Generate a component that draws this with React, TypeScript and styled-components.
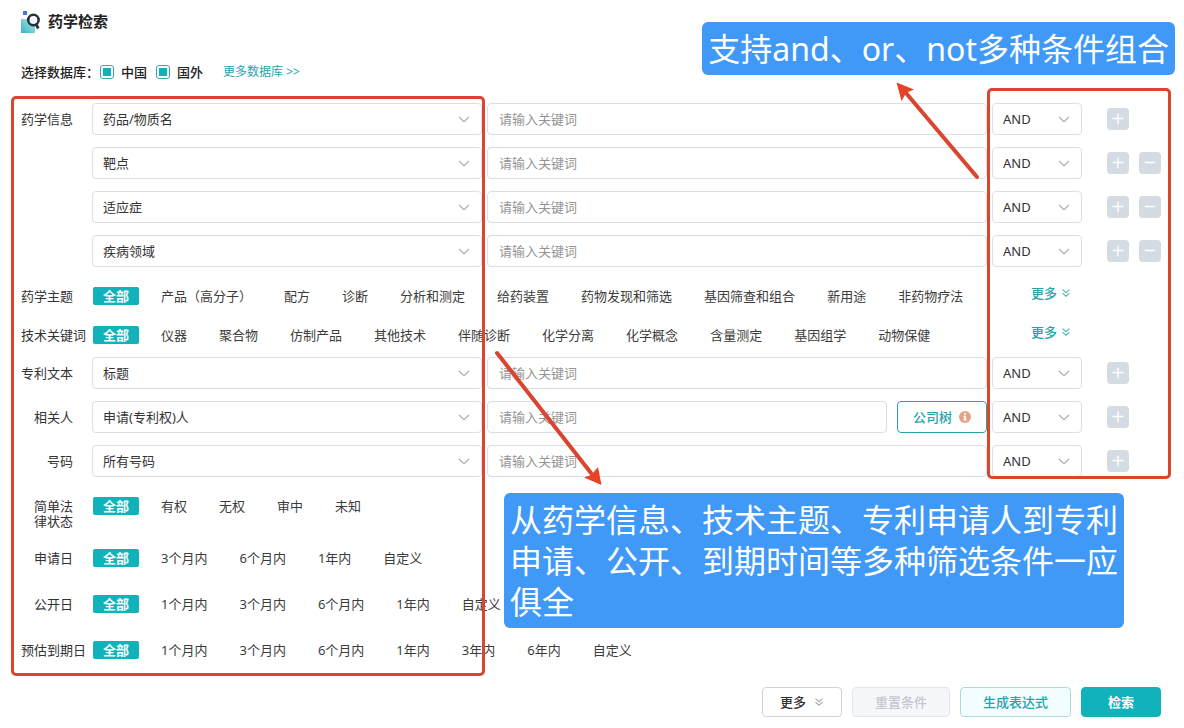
import React from "react";
import styled, { createGlobalStyle, css } from "styled-components";

const teal = "#12b2bb";
const tealText = "#26a3ab";
const red = "#d9452e";

const GlobalStyle = createGlobalStyle`
  *, *::before, *::after { box-sizing: border-box; }
  body {
    margin: 0;
    background: #fff;
    color: #333;
    font: 13px/18px "Noto Sans", "Noto Sans CJK SC", sans-serif;
  }
  button, input, select { font: inherit; color: inherit; margin: 0; }
  button { cursor: pointer; }
`;

const Page = styled.main`
  position: relative;
  padding: 11px 23px 11px 21px;
`;

const Header = styled.header`
  display: flex;
  align-items: flex-start;
  gap: 7px;
  height: 22px;
`;

const Title = styled.h1`
  margin: 0;
  font-size: 15px;
  line-height: 20px;
  font-weight: 700;
  color: #222;
`;

const Databases = styled.div`
  display: flex;
  align-items: center;
  margin-top: 30px;
  font-weight: 500;
  color: #222;
`;

const DatabaseOption = styled.label`
  display: flex;
  align-items: center;
  gap: 7px;
  margin: 0 8px 0 1px;
`;

const Checkbox = styled.input`
  appearance: none;
  width: 14px;
  height: 14px;
  padding: 2px;
  border: 1px solid #3aa9b0;
  border-radius: 3px;

  &:checked {
    background: ${teal} content-box;
  }
`;

const MoreDatabases = styled.a`
  margin-left: 12px;
  font-size: 12px;
  font-weight: 400;
  color: ${tealText};
  text-decoration: none;
`;

const Form = styled.form`
  margin-top: 22px;
`;

const FieldGroup = styled.div`
  display: grid;
  gap: 12px;
`;

const FieldRow = styled.div`
  display: grid;
  grid-template-columns: 66px minmax(0, 39fr) minmax(0, 50fr) 90px 74px;
  column-gap: 5px;
  align-items: center;
`;

const rowLabel = css`
  width: 52px;
  text-align: right;
  white-space: nowrap;
  color: #333;
`;

const FieldLabel = styled.label`
  ${rowLabel}
`;

const FilterLabel = styled.span<{ $wrap?: boolean }>`
  ${rowLabel}
  ${(p) =>
    p.$wrap &&
    css`
      padding: 2px 0 0 12px;
      line-height: 15px;
      white-space: normal;
    `}
`;

const SelectBox = styled.div`
  position: relative;
`;

const Select = styled.select`
  appearance: none;
  display: block;
  width: 100%;
  height: 32px;
  padding: 0 30px 0 10px;
  border: 1px solid #dcdfe6;
  border-radius: 4px;
  background: #fff;
`;

const SelectArrow = styled.svg`
  position: absolute;
  top: 13px;
  right: 12px;
  width: 12px;
  height: 7px;
  pointer-events: none;
`;

const KeywordCell = styled.div`
  display: flex;
  gap: 10px;
`;

const Keyword = styled.input`
  flex: 1;
  min-width: 0;
  height: 32px;
  padding: 0 11px;
  border: 1px solid #d8dfe6;
  border-radius: 4px;
  background: #fff;

  &::placeholder {
    color: #949494;
    opacity: 1;
  }
`;

const CompanyTree = styled.button`
  display: flex;
  align-items: center;
  justify-content: center;
  gap: 7px;
  width: 90px;
  height: 32px;
  padding: 0;
  border: 1px solid #2aa0a8;
  border-radius: 4px;
  background: #fff;
  font-weight: 500;
  color: ${tealText};
`;

const RowActions = styled.div`
  display: flex;
  gap: 10px;
  padding-left: 20px;
`;

const SquareButton = styled.button`
  display: grid;
  place-items: center;
  width: 22px;
  height: 22px;
  padding: 0;
  border: 0;
  border-radius: 4px;
  background: #d5dbe3;
`;

const FilterGroup = styled.div<{ $gap: number; $bottom: number }>`
  display: grid;
  gap: ${(p) => p.$gap}px;
  padding: 20px 0 ${(p) => p.$bottom}px;
`;

const FilterRow = styled.div<{ $height: number }>`
  display: grid;
  grid-template-columns: 72px minmax(0, 1fr) 130px;
  align-items: start;
  min-height: ${(p) => p.$height}px;
`;

const Chips = styled.div`
  display: flex;
  gap: 12px;
`;

const Chip = styled.button<{ $active?: boolean }>`
  height: 18px;
  padding: 0 10px;
  border: 0;
  border-radius: 2px;
  background: ${(p) => (p.$active ? teal : "transparent")};
  color: ${(p) => (p.$active ? "#fff" : "#3c3c3c")};
  font-weight: ${(p) => (p.$active ? 700 : 400)};
  line-height: 18px;
  white-space: nowrap;
`;

const MoreLink = styled.button`
  display: flex;
  align-items: center;
  gap: 5px;
  padding: 0;
  border: 0;
  background: none;
  line-height: 12px;
  font-weight: 500;
  color: ${tealText};
`;

const Footer = styled.footer`
  display: flex;
  justify-content: flex-end;
  gap: 10px;
`;

const looks = {
  plain: css`
    padding: 0 18px 0 17px;
    border-color: #d0d3da;
    background: #fff;
    color: #333;
  `,
  muted: css`
    padding: 0 22px;
    border-color: #e4e6ee;
    background: #f6f7fa;
    color: #c3c7cf;
  `,
  outline: css`
    padding: 0 22px;
    border-color: #aadcdf;
    background: #f3feff;
    color: ${tealText};
  `,
  primary: css`
    padding: 0 26px;
    border-color: ${teal};
    background: ${teal};
    color: #fff;
    font-weight: 700;
  `,
};

const FooterButton = styled.button<{ $look: keyof typeof looks }>`
  display: flex;
  align-items: center;
  gap: 9px;
  height: 30px;
  border: 1px solid;
  border-radius: 4px;
  font-weight: 500;
  ${(p) => looks[p.$look]}
`;

/* Guide layer: frames, arrows and captions drawn over the form */
const LeftFrame = styled.div`
  position: absolute;
  top: 96px;
  left: 11px;
  width: 474px;
  height: 580px;
  border: 3px solid ${red};
  border-radius: 5px;
  pointer-events: none;
`;

const RightFrame = styled(LeftFrame)`
  top: 88px;
  right: 13px;
  left: auto;
  width: 184px;
  height: 391px;
`;

const Caption = styled.p`
  position: absolute;
  margin: 0;
  padding: 6px;
  border-radius: 6px;
  background: #4098f7;
  color: #fff;
  font-size: 32px;
  line-height: 41px;
`;

const TopCaption = styled(Caption)`
  top: 22px;
  right: 9px;
  white-space: nowrap;
`;

const BottomCaption = styled(Caption)`
  top: 493px;
  left: 504px;
  width: 620px;
`;

const Arrow = styled.svg`
  position: absolute;
  overflow: visible;
  pointer-events: none;
`;

const UpArrow = styled(Arrow)`
  top: 82px;
  right: 204px;
`;

const DownArrow = styled(Arrow)`
  top: 350px;
  left: 494px;
`;

const Logo = () => (
  <svg width="20" height="22" viewBox="0 0 20 22" aria-hidden="true">
    <defs>
      <linearGradient id="logo" x1="0" y1="1" x2="1" y2="0">
        <stop offset="0" stopColor="#35b5be" />
        <stop offset="1" stopColor="#b5e6e8" />
      </linearGradient>
    </defs>
    <path d="M0 8h14v14H0z" fill="url(#logo)" />
    <path d="M2 0h4v4H2z" fill="#3f7bd8" />
    <circle cx="12.4" cy="9" r="5.2" fill="#fff" fillOpacity=".75" stroke="#24323d" strokeWidth="2.6" />
    <path d="M14.600 12.500l2.700 5" stroke="#24323d" strokeWidth="2.800" />
  </svg>
);

const DoubleDown = ({ color }: { color: string }) => (
  <svg width="8" height="8" viewBox="0 0 8 8" fill="none" stroke={color} strokeWidth="1.2" aria-hidden="true">
    <path d="M.5.6L4 3.600 7.500.6M.5 4.100L4 7.100l3.500-3" />
  </svg>
);

const InfoIcon = () => (
  <svg width="12" height="12" viewBox="0 0 12 12" aria-hidden="true">
    <circle cx="6" cy="6" r="6" fill="#e8a283" />
    <path d="M5 2h2v1.8H5zM4.3 4.8H7v3.7h.8v1H4.2v-1H5V5.8h-.7z" fill="#fff" />
  </svg>
);

const Dropdown = ({ id, label, value }: { id?: string; label?: string; value: string }) => (
  <SelectBox>
    <Select id={id} aria-label={label} defaultValue={value}>
      <option>{value}</option>
    </Select>
    <SelectArrow viewBox="0 0 12 7" fill="none" stroke="#a9adb4" strokeWidth="1.2">
      <path d="M1 1l5 4.6L11 1" />
    </SelectArrow>
  </SelectBox>
);

type Field = { id: string; label?: string; value: string; tree?: boolean; removable?: boolean };

const QueryField = ({ id, label, value, tree, removable }: Field) => (
  <FieldRow>
    {label ? <FieldLabel htmlFor={id}>{label}</FieldLabel> : <span />}
    <Dropdown id={id} label={label ? undefined : value} value={value} />
    <KeywordCell>
      <Keyword type="text" placeholder="请输入关键词" aria-label={value} />
      {tree && (
        <CompanyTree type="button">
          公司树
          <InfoIcon />
        </CompanyTree>
      )}
    </KeywordCell>
    <Dropdown label="AND" value="AND" />
    <RowActions>
      <SquareButton type="button" aria-label="+">
        <svg width="12" height="12" viewBox="0 0 12 12" stroke="#fff" strokeWidth="1.4">
          <path d="M6 .5v11M.5 5.500h11" />
        </svg>
      </SquareButton>
      {removable && (
        <SquareButton type="button" aria-label="-">
          <svg width="12" height="12" viewBox="0 0 12 12" stroke="#fff" strokeWidth="1.6">
            <path d="M1 5.500h10" />
          </svg>
        </SquareButton>
      )}
    </RowActions>
  </FieldRow>
);

type Filter = { label: string; items: string[]; more?: boolean; wrap?: boolean };

const FilterLine = ({ label, items, more, wrap, height }: Filter & { height: number }) => (
  <FilterRow $height={height}>
    <FilterLabel $wrap={wrap}>{label}</FilterLabel>
    <Chips role="group" aria-label={label}>
      <Chip type="button" $active>全部</Chip>
      {items.map((item) => (
        <Chip type="button" key={item}>{item}</Chip>
      ))}
    </Chips>
    {more && (
      <MoreLink type="button">
        更多
        <DoubleDown color="#4fb5bb" />
      </MoreLink>
    )}
  </FilterRow>
);

const drugFields: Field[] = [
  { id: "drug", label: "药学信息", value: "药品/物质名" },
  { id: "target", value: "靶点", removable: true },
  { id: "indication", value: "适应症", removable: true },
  { id: "disease", value: "疾病领域", removable: true },
];

const topicFilters: Filter[] = [
  {
    label: "药学主题",
    more: true,
    items: ["产品（高分子）", "配方", "诊断", "分析和测定", "给药装置", "药物发现和筛选", "基因筛查和组合", "新用途", "非药物疗法"],
  },
  {
    label: "技术关键词",
    more: true,
    items: ["仪器", "聚合物", "仿制产品", "其他技术", "伴随诊断", "化学分离", "化学概念", "含量测定", "基因组学", "动物保健"],
  },
];

const patentFields: Field[] = [
  { id: "text", label: "专利文本", value: "标题" },
  { id: "person", label: "相关人", value: "申请(专利权)人", tree: true },
  { id: "number", label: "号码", value: "所有号码" },
];

const dateFilters: Filter[] = [
  { label: "简单法律状态", wrap: true, items: ["有权", "无权", "审中", "未知"] },
  { label: "申请日", items: ["3个月内", "6个月内", "1年内", "自定义"] },
  { label: "公开日", items: ["1个月内", "3个月内", "6个月内", "1年内", "自定义"] },
  { label: "预估到期日", items: ["1个月内", "3个月内", "6个月内", "1年内", "3年内", "6年内", "自定义"] },
];

export default function App() {
  return (
    <>
      <GlobalStyle />
      <Page>
        <Header>
          <Logo />
          <Title>药学检索</Title>
        </Header>
        <Databases>
          <span>选择数据库：</span>
          <DatabaseOption>
            <Checkbox type="checkbox" defaultChecked />
            中国
          </DatabaseOption>
          <DatabaseOption>
            <Checkbox type="checkbox" defaultChecked />
            国外
          </DatabaseOption>
          <MoreDatabases href="#databases">更多数据库 &gt;&gt;</MoreDatabases>
        </Databases>
        <Form onSubmit={(e) => e.preventDefault()}>
          <FieldGroup>
            {drugFields.map((f) => <QueryField key={f.id} {...f} />)}
          </FieldGroup>
          <FilterGroup $gap={21} $bottom={13}>
            {topicFilters.map((f) => <FilterLine key={f.label} height={18} {...f} />)}
          </FilterGroup>
          <FieldGroup>
            {patentFields.map((f) => <QueryField key={f.id} {...f} />)}
          </FieldGroup>
          <FilterGroup $gap={20} $bottom={20}>
            {dateFilters.map((f) => <FilterLine key={f.label} height={26} {...f} />)}
          </FilterGroup>
          <Footer>
            <FooterButton type="button" $look="plain">
              更多
              <DoubleDown color="#a5a8ad" />
            </FooterButton>
            <FooterButton type="reset" $look="muted">重置条件</FooterButton>
            <FooterButton type="button" $look="outline">生成表达式</FooterButton>
            <FooterButton type="submit" $look="primary">检索</FooterButton>
          </Footer>
        </Form>

        <LeftFrame />
        <RightFrame />
        <UpArrow width="84" height="98" viewBox="0 0 84 98">
          <path d="M10 11L81 95" stroke={red} strokeWidth="4" strokeLinecap="round" />
          <path d="M.5.5L18 7.500 11 10.500 9.500 12 5.500 19z" fill="#e8412a" />
        </UpArrow>
        <DownArrow width="108" height="136" viewBox="0 0 108 136">
          <path d="M3 3L97 123" stroke={red} strokeWidth="4" strokeLinecap="round" />
          <path d="M107.500 135L90 127.500l7-2.500 2-2 5-6z" fill="#e8412a" />
        </DownArrow>
        <TopCaption>支持and、or、not多种条件组合</TopCaption>
        <BottomCaption>从药学信息、技术主题、专利申请人到专利申请、公开、到期时间等多种筛选条件一应俱全</BottomCaption>
      </Page>
    </>
  );
}
